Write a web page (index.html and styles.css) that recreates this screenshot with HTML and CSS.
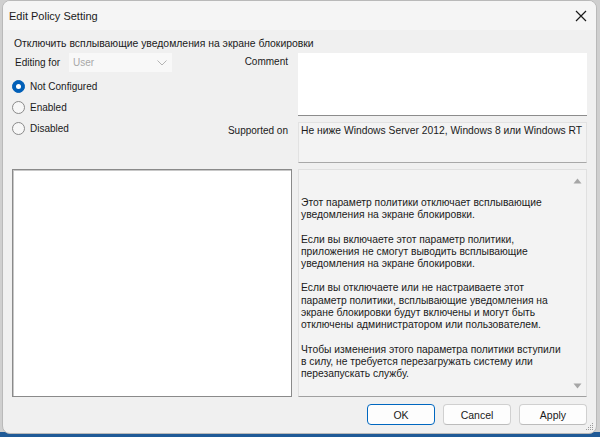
FILE: index.html
```html
<!DOCTYPE html>
<html lang="ru">
<head>
<meta charset="utf-8">
<title>Edit Policy Setting</title>
<link rel="stylesheet" href="styles.css">
</head>
<body>
<div class="window">
  <div class="titlebar">
    <span class="title">Edit Policy Setting</span>
    <svg class="close" width="12" height="12" viewBox="0 0 12 12"><path d="M1 1L11 11M11 1L1 11" stroke="#1a1a1a" stroke-width="1.2" fill="none"/></svg>
  </div>
  <div class="content">
    <div class="policy-name">Отключить всплывающие уведомления на экране блокировки</div>
    <div class="top-grid">
      <div class="left-col">
        <div class="editing">
          <span class="editing-label">Editing for</span>
          <div class="dropdown">
            <span>User</span>
            <svg width="10" height="6" viewBox="0 0 10 6"><path d="M0.5 0.5L5 5L9.5 0.5" stroke="#b4b4b4" stroke-width="1" fill="none"/></svg>
          </div>
        </div>
        <div class="radios">
          <div class="radio-row"><span class="radio checked"></span><span>Not Configured</span></div>
          <div class="radio-row"><span class="radio"></span><span>Enabled</span></div>
          <div class="radio-row"><span class="radio"></span><span>Disabled</span></div>
        </div>
      </div>
      <div class="label label-comment">Comment</div>
      <div class="box comment-box"></div>
      <div class="label label-supported">Supported on</div>
      <div class="box supported-box">Не ниже Windows Server 2012, Windows 8 или Windows RT</div>
    </div>
    <div class="panes">
      <div class="options-pane"></div>
      <div class="help-pane">
        <div class="help-text">
          <p>Этот параметр политики отключает всплывающие уведомления на экране блокировки.</p>
          <p>Если вы включаете этот параметр политики, приложения не смогут выводить всплывающие уведомления на экране блокировки.</p>
          <p>Если вы отключаете или не настраиваете этот параметр политики, всплывающие уведомления на экране блокировки будут включены и могут быть отключены администратором или пользователем.</p>
          <p>Чтобы изменения этого параметра политики вступили в силу, не требуется перезагружать систему или перезапускать службу.</p>
        </div>
        <div class="scrollbar">
          <svg width="9" height="6" viewBox="0 0 9 6"><path d="M4.5 0.5L8.5 5.5H0.5Z" fill="#a6a6a6"/></svg>
          <svg width="9" height="6" viewBox="0 0 9 6"><path d="M0.5 0.5H8.5L4.5 5.5Z" fill="#a6a6a6"/></svg>
        </div>
      </div>
    </div>
    <div class="buttons">
      <button class="btn btn-default">OK</button>
      <button class="btn">Cancel</button>
      <button class="btn">Apply</button>
    </div>
  </div>
  <svg class="grip" width="8" height="8" viewBox="0 0 8 8"><g fill="#9a9a9a"><rect x="6" y="0" width="1" height="1"/><rect x="4" y="2" width="1" height="1"/><rect x="6" y="2" width="1" height="1"/><rect x="2" y="4" width="1" height="1"/><rect x="4" y="4" width="1" height="1"/><rect x="6" y="4" width="1" height="1"/><rect x="0" y="6" width="1" height="1"/><rect x="2" y="6" width="1" height="1"/><rect x="4" y="6" width="1" height="1"/><rect x="6" y="6" width="1" height="1"/></g></svg>
</div>
</body>
</html>
```
FILE: styles.css
```css
* { box-sizing: border-box; }
html, body { margin: 0; padding: 0; }
body {
  width: 600px;
  height: 437px;
  overflow: hidden;
  background: linear-gradient(to bottom, #cfcfcf 0, #cfcfcf 432px, #1f5a97 432px);
  font-family: "Liberation Sans", Arial, sans-serif;
  font-size: 10px;
  color: #1a1a1a;
  padding: 0 3px 0 2px;
}
.window {
  position: relative;
  width: 595px;
  height: 434px;
  background: #f0f0f0;
  border: 1px solid #b9b9b9;
  border-radius: 8px;
  overflow: hidden;
  display: flex;
  flex-direction: column;
}
.titlebar {
  height: 29px;
  background: #f5f5f5;
  display: flex;
  align-items: center;
  justify-content: space-between;
  padding: 0 9px 0 6px;
  flex: none;
}
.title { font-size: 11px; color: #1a1a1a; }
.content {
  padding: 5px 9px 0 9px;
  display: flex;
  flex-direction: column;
}
.policy-name {
  height: 18px;
  line-height: 18px;
  padding-left: 2px;
  white-space: nowrap;
  font-size: 10.4px;
}
.top-grid {
  display: grid;
  grid-template-columns: 1fr auto 289px;
  grid-template-rows: 63px 41px;
  column-gap: 10px;
  row-gap: 6px;
}
.left-col {
  grid-column: 1;
  grid-row: 1 / 3;
  display: flex;
  flex-direction: column;
}
.editing { display: flex; align-items: center; height: 19px; }
.editing-label { width: 57px; padding-left: 3px; white-space: nowrap; }
.dropdown {
  width: 103px;
  height: 19px;
  background: #f8f8f8;
  display: flex;
  align-items: center;
  justify-content: space-between;
  padding: 0 5px 0 4px;
  color: #a8a8a8;
}
.radios { display: flex; flex-direction: column; padding-top: 4px; }
.radio-row { display: flex; align-items: center; height: 21px; gap: 5px; white-space: nowrap; }
.radio {
  width: 13px;
  height: 13px;
  border-radius: 50%;
  border: 1px solid #8a8a8a;
  background: #f7f7f7;
  flex: none;
}
.radio.checked {
  background: #005fb8;
  border-color: #005fb8;
  position: relative;
}
.radio.checked::after {
  content: "";
  position: absolute;
  left: 3px; top: 3px;
  width: 5px; height: 5px;
  border-radius: 50%;
  background: #fff;
}
.label { grid-column: 2; text-align: right; padding-top: 3px; white-space: nowrap; }
.label-comment { grid-row: 1; }
.label-supported { grid-row: 2; }
.box { grid-column: 3; }
.comment-box { grid-row: 1; background: #fff; border-bottom: 1px solid #8c8c8c; }
.supported-box {
  grid-row: 2;
  background: #f3f3f3;
  border: 1px solid #e2e2e2;
  border-bottom: 1px solid #a8a8a8;
  padding: 2px 2px;
  white-space: nowrap;
  font-size: 10.3px;
}
.panes {
  display: grid;
  grid-template-columns: 280px 289px;
  column-gap: 6px;
  height: 228px;
  margin-top: 6px;
}
.options-pane {
  background: #fff;
  border: 1px solid #8a8a8a;
  box-shadow: inset 1px 1px 0 #c8c8c8;
}
.help-pane {
  background: #f3f3f3;
  border: 1px solid #e0e0e0;
  border-bottom: 1px solid #a0a0a0;
  display: flex;
  overflow: hidden;
}
.help-text {
  flex: 1;
  padding: 27px 4px 0 2px;
  font-size: 10.3px;
  line-height: 12.3px;
  overflow: hidden;
}
.help-text p { margin: 0 0 12px 0; }
.scrollbar {
  width: 17px;
  flex: none;
  display: flex;
  flex-direction: column;
  justify-content: space-between;
  align-items: center;
  padding: 8px 0 7px;
}
.buttons {
  display: flex;
  justify-content: flex-end;
  gap: 8px;
  margin-top: 7px;
}
.btn {
  width: 68px;
  height: 21px;
  font: inherit;
  font-size: 10.5px;
  color: #1a1a1a;
  background: #fdfdfd;
  border: 1px solid #d0d0d0;
  border-bottom-color: #bcbcbc;
  border-radius: 4px;
  padding: 0;
}
.btn-default { border: 1px solid #0067c0; }
.grip { position: absolute; right: 2px; bottom: 2px; }
```
